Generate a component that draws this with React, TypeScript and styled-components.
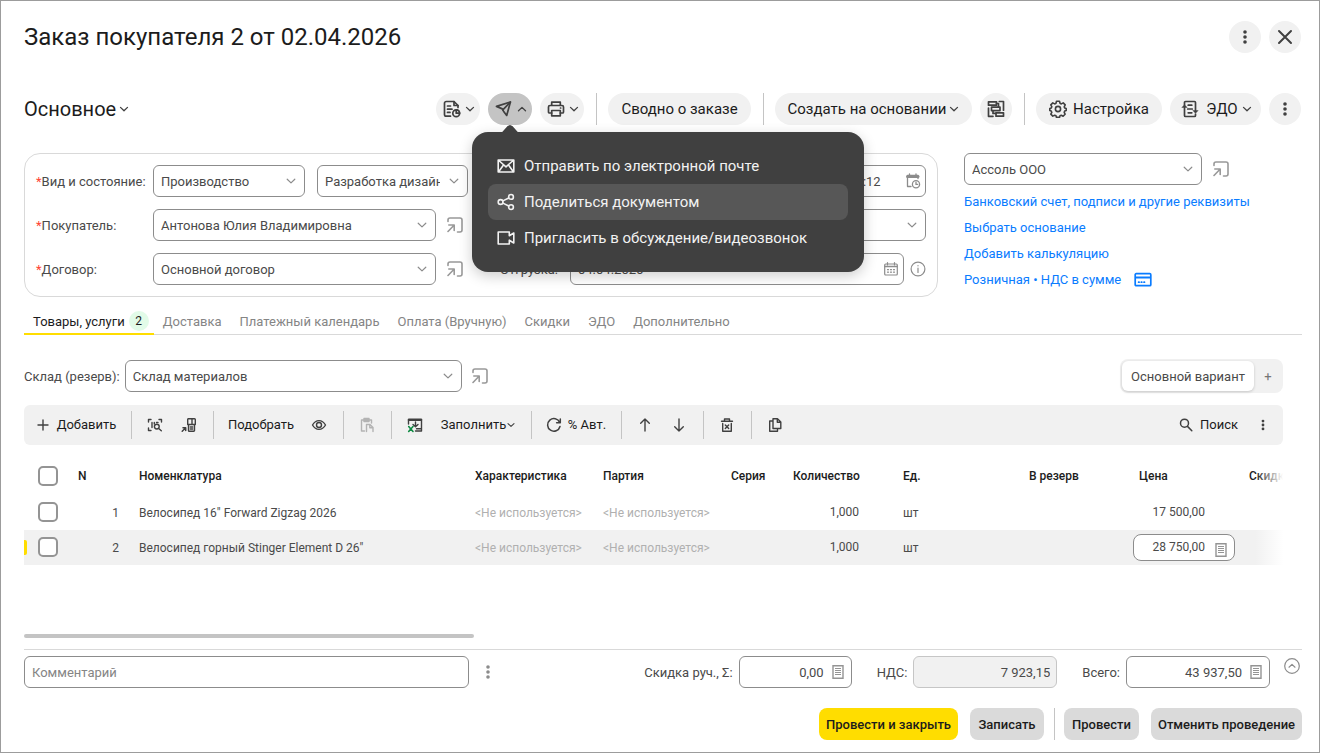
import React from 'react';
import styled, { createGlobalStyle, css } from 'styled-components';

const c = {
  ink: '#1c1c1c',
  text: '#4a4a4a',
  muted: '#858585',
  faint: '#b0b0b0',
  icon: '#404040',
  frame: '#8c8c8c',
  line: '#d9d9d9',
  soft: '#f1f1f1',
  link: '#0a7cff',
  brand: '#ffdd00',
};

const GlobalStyle = createGlobalStyle`
  *, *::before, *::after { box-sizing: border-box; }
  body { margin: 0; background: #fff; }
  body, button, input, select, table {
    font-family: Roboto, "Liberation Sans", sans-serif;
    font-size: 13px;
    line-height: 16px;
    color: ${c.text};
  }
  button { border: 0; padding: 0; background: none; cursor: pointer; }
  svg { display: block; flex: none; }
`;

/* ---------- icons ---------- */

type IconProps = { size?: number; color?: string; width?: number; children: React.ReactNode };

const Svg = ({ size = 18, color = c.icon, width = 1.5, children }: IconProps) => (
  <svg width={size} height={size} viewBox={`0 0 ${size} ${size}`} fill="none" stroke={color}
    strokeWidth={width} strokeLinecap="round" strokeLinejoin="round" aria-hidden="true">
    {children}
  </svg>
);

const Chevron = ({ up = false }: { up?: boolean }) => (
  <Svg size={10} width={1.3}>
    <path d={up ? 'M1.5 6.8 5 3.4l3.5 3.4' : 'M1.5 3.4 5 6.8l3.5-3.4'} />
  </Svg>
);
const SmallChevron = () => <Svg size={8} width={1.1}><path d="M1 2.6 4 5.4l3-2.8" /></Svg>;
const FieldChevron = () => (
  <Svg size={10} color="#8c8c8c" width={1.2}><path d="M1.2 3.2 5 6.9 8.8 3.2" /></Svg>
);
const Dots = ({ color = c.icon, size = 18 }: { color?: string; size?: number }) => (
  <svg width={size} height={size} viewBox="0 0 18 18" fill={color} aria-hidden="true">
    <circle cx="9" cy="4" r="1.8" /><circle cx="9" cy="9" r="1.8" /><circle cx="9" cy="14" r="1.8" />
  </svg>
);
const CloseIcon = () => <Svg width={2}><path d="M3 3l12 12M15 3 3 15" /></Svg>;
const ReportIcon = () => (
  <Svg width={1.7}>
    <path d="M7.5 16.2H3.2A1.7 1.7 0 0 1 1.5 14.5V3.2A1.7 1.7 0 0 1 3.2 1.5H11L15 5.5V7.5" />
    <path d="M11 1.5V5.5H15M4.5 6H7.5M4.5 9.2H9M4.5 12.4H7" />
    <circle cx="13.2" cy="13.2" r="3.4" />
    <path d="M13.2 9.8a3.4 3.4 0 0 1 3.4 3.4h-3.4z" fill={c.soft} />
  </Svg>
);
const SendIcon = () => (
  <Svg width={1.7}>
    <path d="M1.5 6.4 15.4 2l-3.7 13.5-3.2-4.3-1.2-2.3z" />
    <path d="M7.8 9.8 15.4 2" />
  </Svg>
);
const PrinterIcon = () => (
  <Svg width={1.7}>
    <path d="M4.7 5.5V2.2h8.6v3.3M4.7 13H2.5a1 1 0 0 1-1-1V7a1.5 1.5 0 0 1 1.5-1.5h12A1.5 1.5 0 0 1 16.5 7v5a1 1 0 0 1-1 1h-2.2" />
    <path d="M4.7 10.5h8.6v5.3H4.7zM13.5 8h.2" />
  </Svg>
);
const StructureIcon = () => (
  <Svg width={1.7}>
    <path d="M1.5 1.8h8v3.4h-8zM4.5 7.2h8.5v3.4H4.5zM9 12.8h7.5v3.4H9z" />
    <path d="M12.3 1.5h4.2v8.7M1.5 8v8.3h4.5M9.5 3.5h2v3.5M6 10.8v2.6h2.7" />
  </Svg>
);
const GearIcon = () => (
  <Svg width={1.6}>
    <circle cx="9" cy="9" r="2.6" />
    <path d="M7.5 1.3h3l.5 2 1.3.6 1.9-1 2 2-1 1.9.6 1.3 1.4.4v2l-1.5.6-.5 1.3.9 1.8-2 2-1.8-.9-1.3.5-.5 1.6h-3L7 15.7l-1.3-.5-1.900.9-2-2 1-1.800-.6-1.300-1.400-.5v-2l1.500-.5.5-1.300-1-1.800 2-2 1.900 1L7 3.300z" />
  </Svg>
);
const EdoIcon = () => (
  <Svg width={1.7}>
    <path d="M3.5 5V2.500a1 1 0 0 1 1-1h9a1 1 0 0 1 1 1V11M3.500 7v8.500a1 1 0 0 0 1 1h9a1 1 0 0 0 1-1v-1.500" />
    <path d="M7.2 5.2h3.6M6.7 9h4.6M7.2 12.8h3.6" />
    <path d="M1.2 7.2 3.5 4.8 5.8 7.2zM12.2 10.8l2.3 2.4 2.3-2.4z" fill={c.icon} strokeWidth=".6" />
  </Svg>
);
const MailIcon = () => (
  <Svg color="#f2f2f2" width={1.6}>
    <path d="M1.2 3h15.6v12H1.2zM1.8 3.5 9 9.8l7.2-6.3M1.8 14.5 6.5 8M16.2 14.5 11.5 8" />
  </Svg>
);
const ShareIcon = () => (
  <Svg color="#f2f2f2" width={1.6}>
    <circle cx="3.6" cy="9" r="2.4" /><circle cx="14" cy="3.9" r="2.4" /><circle cx="14" cy="14.1" r="2.4" />
    <path d="M5.9 7.9 11.8 5M5.900 10.100l5.900 2.900" />
  </Svg>
);
const VideoIcon = () => (
  <Svg color="#f2f2f2" width={1.6}>
    <path d="M1.2 3h11.1v3.8L16.8 4v10l-4.5-2.8V15H1.2z" />
  </Svg>
);
const OpenIcon = () => (
  <Svg size={16} color="#999" width={1.6}>
    <path d="M1 4.5V3a2 2 0 0 1 2-2h10a2 2 0 0 1 2 2v10a2 2 0 0 1-2 2H10.5" />
    <path d="M1.8 8H7.2v5.500M7 8.200 1 14.500" />
  </Svg>
);
const DateTimeIcon = () => (
  <Svg size={16} color="#8c8c8c" width={1.3}>
    <path d="M6 13.5H2.5v-11h10.5v3M4.5 1v1.5M11 1v1.5" />
    <path d="M2.5 3.5h10.5" strokeWidth="3" />
    <circle cx="11" cy="11.2" r="3.6" /><path d="M11 9.2v2.2h1.6" />
  </Svg>
);
const CalendarIcon = () => (
  <Svg size={16} color="#8c8c8c" width={1.2}>
    <rect x="1.7" y="3" width="12.6" height="11" rx="1" /><path d="M2 5.5h12" strokeWidth="1.5" /><path d="M4.5 1.5V4M11.5 1.5V4" />
    <path d="M4.5 8.7h1M7.5 8.7h1M10.5 8.7h1M4.5 11.2h1M7.5 11.2h1M10.5 11.2h1" />
  </Svg>
);
const InfoIcon = () => (
  <Svg size={16} color="#8c8c8c" width={1.2}>
    <circle cx="8" cy="8" r="6.9" /><path d="M8 7.2v4.3M8 4.6v.2" />
  </Svg>
);
const CardIcon = () => (
  <Svg color={c.link} width={1.7}>
    <rect x="1.2" y="2.7" width="15.6" height="12" rx="1" /><path d="M2 6.6h14" strokeWidth="2" />
    <path d="M4.6 11.2h.5M7.3 11.2h.5M10 11.2h.5" />
  </Svg>
);
const PlusIcon = () => <Svg size={16} width={1.4}><path d="M8 3v10M3 8h10" /></Svg>;
const ScanIcon = () => (
  <Svg size={16} width={1.4}>
    <path d="M1.5 5V2.5h2.500M12 2.500h2.500V5M4 13.500H1.500V11M5 5.500v5M7.300 5.500v1.500M9.500 5.500h1.500" />
    <circle cx="9.8" cy="9.6" r="2.4" /><path d="M11.7 11.5l2.6 2.3" />
  </Svg>
);
const TerminalIcon = () => (
  <Svg size={16} width={1.4}>
    <path d="M7 1.7h6.5a.8.8 0 0 1 .8.8v5H6.7V2.500zM7.500 7.500v6a.8.8 0 0 0 .8.8h4.400a.8.8 0 0 0 .8-.8v-6M11 2v5.500M9.300 10h2.400M9.300 12h2.400" />
    <path d="M1.2 14.3l3-3M2 10.8h2.7v2.7" strokeWidth="1.5" />
  </Svg>
);
const EyeIcon = () => (
  <Svg size={16} width={1.4}>
    <path d="M1.5 8Q4 3.6 8 3.6T14.5 8Q12 12.4 8 12.4T1.5 8z" />
    <circle cx="8" cy="8" r="2.5" />
  </Svg>
);
const PasteIcon = () => (
  <Svg size={16} color="#b3b3b3" width={1.4}>
    <path d="M5.5 14H2.5V3h10v3M5 1.5h5v3H5z" /><path d="M7.5 7.5h3.5l3 3v4M7.5 7.5v7M10.8 7.7v3h3" />
  </Svg>
);
const ExcelIcon = () => (
  <Svg size={16} width={1.4}>
    <path d="M2 2.7h12" strokeWidth="2.6" /><path d="M1.5 3v4M14.5 3v11H8.5M8.500 5v4.500M6 7.500l2.500 2.300L11 7.500M9.500 11.800h4.500" />
    <path d="M1.7 9.5l4.3 5M6 9.5l-4.3 5" stroke="#0f8a43" strokeWidth="1.6" />
  </Svg>
);
const RefreshIcon = () => (
  <Svg size={16} width={1.5}><path d="M14 9.5A6.3 6.3 0 1 1 13.7 5.4M14.3 2v3.7h-3.7" /></Svg>
);
const ArrowIcon = ({ down = false }: { down?: boolean }) => (
  <Svg size={16} width={1.4}>
    <path d={down ? 'M8 2v12M3.7 9.8 8 14 12.3 9.8' : 'M8 14V2M3.7 6.2 8 2 12.3 6.2'} />
  </Svg>
);
const TrashIcon = () => (
  <Svg size={16} width={1.4}>
    <path d="M2.5 4.2h11M5.5 4V2h5v2M3.7 6.5v7.8h8.6V6.5M6.3 8l3.4 3.6M9.7 8l-3.4 3.6" />
  </Svg>
);
const CopyIcon = () => (
  <Svg size={16} width={1.4}>
    <path d="M6 1.7h4.5L13.8 5v6.5H6zM10.3 2v3.2h3.3M6 4H2.7v10.3h7.8v-2.8" />
  </Svg>
);
const SearchIcon = () => (
  <Svg size={16} width={1.5}><circle cx="6.5" cy="6.2" r="4" /><path d="M9.5 9.4l4.3 4.3" /></Svg>
);
const CalcIcon = () => (
  <Svg size={14} color="#949494" width={1.4}>
    <path d="M2 .7h10v12.600H2z" strokeLinejoin="miter" />
    <path d="M4 3.5h6M4 5.5h6M4 7.5h6M4 9.5h6" strokeWidth="1" strokeLinecap="butt" />
  </Svg>
);
const CollapseIcon = () => (
  <Svg size={16} color="#8c8c8c" width={1.2}><circle cx="8" cy="8" r="7.3" /><path d="M5 9.2 8 6.4l3 2.8" /></Svg>
);

/* ---------- layout ---------- */

const Page = styled.main`
  display: flex;
  flex-direction: column;
  min-height: 100vh;
  padding: 20px 17px 12px 23px;
  border: 1px solid #9c9c9c;
  background: #fff;
`;
const Header = styled.header`
  display: flex;
  align-items: center;
  justify-content: space-between;
  padding-right: 1px;
`;
const Title = styled.h1`
  margin: 0;
  font-size: 24px;
  line-height: 32px;
  font-weight: 400;
  color: ${c.ink};
`;
const Cluster = styled.div<{ $gap?: number }>`
  display: flex;
  align-items: center;
  gap: ${p => p.$gap ?? 8}px;
`;
const Toolbar = styled(Header)`
  margin-top: 40px;
`;
const SectionButton = styled.button`
  display: flex;
  align-items: center;
  gap: 3px;
  font-size: 20px;
  line-height: 32px;
  color: ${c.ink};
`;
const Pill = styled.button<{ $w: number; $active?: boolean }>`
  display: flex;
  align-items: center;
  justify-content: center;
  gap: 3px;
  min-width: ${p => p.$w}px;
  height: 32px;
  border-radius: 16px;
  background: ${p => (p.$active ? '#c4c4c4' : c.soft)};
  font-size: 15px;
  line-height: 20px;
  color: ${c.ink};
`;
const IconPill = styled(Pill)`
  gap: 4px;
  padding-left: 2px;
`;
const IconGap = styled.span`
  display: flex;
  margin-right: 3px;
`;
const Rule = styled.span`
  flex: none;
  width: 1px;
  height: 32px;
  background: #c4c4c4;
`;
const ToolbarRule = styled(Rule)`
  margin: 0 3px 0 4px;
`;
const CommandRule = styled(Rule)`
  height: 28px;
  margin: 0 6px 0 7px;
`;
const ActionRule = styled(Rule)`
  margin: 0 -3px 0 -2px;
`;

/* ---------- drop-down menu ---------- */

const MenuAnchor = styled.div`
  position: relative;
`;
const Menu = styled.div`
  position: absolute;
  z-index: 2;
  top: 39px;
  left: -16px;
  width: 392px;
  padding: 16px;
  border-radius: 16px;
  background: #404040;
  box-shadow: 0 4px 14px rgba(0, 0, 0, 0.2);
  &::before {
    content: '';
    position: absolute;
    top: -7px;
    left: 28px;
    width: 20px;
    height: 8px;
    background: #404040;
    clip-path: polygon(0 100%, 10% 92%, 38% 12%, 50% 0, 62% 12%, 90% 92%, 100% 100%);
  }
`;
const MenuItem = styled.button<{ $hover?: boolean }>`
  display: flex;
  align-items: center;
  gap: 9px;
  width: 100%;
  height: 36px;
  padding: 0 9px;
  border-radius: 8px;
  background: ${p => (p.$hover ? '#575757' : 'transparent')};
  font-size: 15px;
  line-height: 20px;
  color: #f2f2f2;
`;

/* ---------- fields ---------- */

const control = css`
  width: 100%;
  height: 32px;
  border: 1px solid ${c.frame};
  border-radius: 6px;
  background: #fff;
  color: ${c.text};
  outline: 0;
`;
const Box = styled.div<{ $w?: number }>`
  position: relative;
  ${p => (p.$w ? `width: ${p.$w}px; flex: none;` : 'flex: 1; min-width: 0;')}
`;
const Select = styled.select`
  ${control}
  appearance: none;
  padding: 2px 27px 0 7px;
  text-overflow: clip;
`;
const Input = styled.input<{ $right?: boolean; $icon?: boolean }>`
  ${control}
  padding: 1px ${p => (p.$icon ? 27 : 6)}px 0 7px;
  text-align: ${p => (p.$right ? 'right' : 'left')};
  &::placeholder { color: ${c.muted}; opacity: 1; }
  &:disabled { background: ${c.soft}; border-color: #c6c6c6; }
`;
const Adornment = styled.span<{ $right?: number }>`
  position: absolute;
  top: 0;
  bottom: 0;
  right: ${p => p.$right ?? 9}px;
  display: flex;
  align-items: center;
  pointer-events: none;
`;

type DropProps = { id?: string; label?: string; value: string; w?: number };
const Dropdown = ({ id, label, value, w }: DropProps) => (
  <Box $w={w}>
    <Select id={id} aria-label={label} defaultValue={value}>
      <option value={value}>{value}</option>
    </Select>
    <Adornment><FieldChevron /></Adornment>
  </Box>
);

const IconButton = styled.button`
  display: flex;
  margin: 0 5px;
`;
const FormArea = styled.div`
  display: flex;
  align-items: flex-start;
  gap: 26px;
  margin-top: 28px;
`;
const Panel = styled.section`
  flex: 1;
  display: grid;
  grid-template-columns: minmax(0, 432px) minmax(0, 1fr);
  gap: 12px 32px;
  padding: 11px;
  border: 1px solid ${c.line};
  border-radius: 16px;
`;
const Row = styled.div<{ $gap?: number; $end?: boolean }>`
  display: flex;
  align-items: center;
  gap: ${p => p.$gap ?? 6}px;
  justify-content: ${p => (p.$end ? 'flex-end' : 'flex-start')};
`;
const FieldPair = styled.div`
  flex: 1;
  display: flex;
  gap: 12px;
  min-width: 0;
`;
const Label = styled.label<{ $w?: number; $required?: boolean }>`
  ${p => p.$w && `width: ${p.$w}px;`}
  flex: none;
  padding-top: 2px;
  white-space: nowrap;
  ${p => p.$required && css`&::before { content: '*'; color: #ff4433; }`}
`;
const Side = styled.aside`
  width: 338px;
`;
const Link = styled.a`
  color: ${c.link};
  text-decoration: none;
  line-height: 26px;
`;
const Links = styled.div`
  display: flex;
  flex-direction: column;
  align-items: flex-start;
  margin-top: 4px;
`;

/* ---------- tabs ---------- */

const Tabs = styled.nav`
  display: flex;
  height: 26px;
  margin-top: 12px;
  box-shadow: inset 0 -1px ${c.line};
`;
const Tab = styled.button<{ $active?: boolean }>`
  display: flex;
  align-items: center;
  gap: 4px;
  height: 26px;
  padding: 2px ${p => (p.$active ? 5 : 9)}px 0 9px;
  border-bottom: 2px solid ${p => (p.$active ? c.brand : 'transparent')};
  color: ${p => (p.$active ? c.ink : c.muted)};
`;
const Badge = styled.span`
  width: 20px;
  height: 20px;
  margin-bottom: 2px;
  border-radius: 10px;
  background: #e2fbe8;
  font-size: 12px;
  line-height: 20px;
  text-align: center;
`;

/* ---------- goods section ---------- */

const Goods = styled.section`
  flex: 1;
  display: flex;
  flex-direction: column;
  margin: 24px 19px 0 0;
`;
const Between = styled.div`
  display: flex;
  align-items: center;
  justify-content: space-between;
`;
const Variants = styled.div`
  display: flex;
  height: 34px;
  padding: 2px 1px 2px 2px;
  border-radius: 8px;
  background: ${c.soft};
`;
const Variant = styled.button<{ $active?: boolean }>`
  width: ${p => (p.$active ? 132 : 28)}px;
  padding-top: 2px;
  border-radius: 6px;
  color: ${p => (p.$active ? c.text : '#757575')};
  ${p => p.$active && css`background: #fff; box-shadow: 0 1px 3px rgba(0, 0, 0, 0.18);`}
`;
const CommandBar = styled.div`
  display: flex;
  align-items: center;
  height: 40px;
  margin-top: 12px;
  padding: 0 3px;
  border-radius: 6px;
  background: ${c.soft};
`;
const Command = styled.button<{ $w?: number }>`
  display: flex;
  align-items: center;
  justify-content: center;
  gap: 6px;
  width: ${p => p.$w ?? 34}px;
  height: 32px;
  white-space: nowrap;
  color: ${c.ink};
`;
const Tight = styled.span`
  display: flex;
  align-items: center;
  gap: 1px;
`;
const Spring = styled.span`
  flex: 1;
`;
const TableWrap = styled.div`
  position: relative;
  flex: 1;
  min-height: 177px;
  margin-top: 12px;
  overflow: hidden;
  &::after {
    content: '';
    position: absolute;
    top: 0;
    right: 0;
    bottom: 0;
    width: 28px;
    background: linear-gradient(to right, rgba(255, 255, 255, 0), #fff);
  }
`;
const Table = styled.table`
  width: calc(100% + 68px);
  table-layout: fixed;
  border-collapse: collapse;
`;
const Th = styled.th`
  height: 38px;
  padding: 0 8px;
  font-size: 12px;
  font-weight: 500;
  text-align: left;
  white-space: nowrap;
  color: ${c.ink};
`;
const Tr = styled.tr<{ $selected?: boolean }>`
  background: ${p => (p.$selected ? c.soft : 'transparent')};
`;
const Td = styled.td<{ $kind?: 'number' | 'index' | 'empty' | 'edit' | 'mark' }>`
  height: 35px;
  padding: 0 8px;
  font-size: 12px;
  white-space: nowrap;
  ${p => p.$kind === 'number' && 'text-align: right; padding: 0 36px 2px 0;'}
  ${p => p.$kind === 'index' && 'text-align: right; padding-right: 12px;'}
  ${p => p.$kind === 'empty' && `color: ${c.faint};`}
  ${p => p.$kind === 'edit' && 'padding: 0 6px 0 2px;'}
  ${p => p.$kind === 'mark' && 'padding: 0 0 1px;'}
`;
const Mark = styled.span<{ $on?: boolean }>`
  display: flex;
  align-items: center;
  gap: 11px;
  &::before {
    content: '';
    width: 3px;
    height: 15px;
    border-radius: 0 2px 2px 0;
    background: ${p => (p.$on ? c.brand : 'transparent')};
  }
`;
const Check = styled.input`
  appearance: none;
  width: 20px;
  height: 20px;
  margin: 0;
  border: 2px solid #949494;
  border-radius: 5px;
  background: #fff;
`;
const CellInput = styled.input`
  ${control}
  height: 27px;
  padding: 0 29px 2px 8px;
  border-radius: 8px;
  font-size: 12px;
  text-align: right;
`;
const CellAdornment = styled(Adornment)`
  padding-top: 5px;
`;
const ScrollThumb = styled.div`
  width: 450px;
  height: 4px;
  border-radius: 2px;
  background: #c4c4c4;
`;

/* ---------- footer ---------- */

const Footer = styled.footer`
  margin-top: 11px;
  padding-top: 6px;
  border-top: 1px solid ${c.line};
`;
const Totals = styled.div`
  display: flex;
  align-items: center;
  gap: 25px;
`;
const Collapse = styled.button`
  display: flex;
  align-self: flex-start;
  margin: 2px 2px 0 -11px;
`;
const Actions = styled.div`
  display: flex;
  align-items: center;
  justify-content: flex-end;
  gap: 12px;
  margin-top: 20px;
`;
const Action = styled.button<{ $primary?: boolean; $w: number }>`
  min-width: ${p => p.$w}px;
  height: 32px;
  padding-top: 1px;
  border-radius: 8px;
  background: ${p => (p.$primary ? c.brand : '#dadada')};
  font-weight: 500;
  color: ${c.ink};
`;

const columns: [string, number | undefined][] = [
  ['N', 61], ['Номенклатура', undefined], ['Характеристика', 128], ['Партия', 128],
  ['Серия', 62], ['Количество', 110], ['Ед.', 126], ['В резерв', 110], ['Цена', 110], ['Скидка', 110],
];
const rows = [
  { n: 1, name: 'Велосипед 16" Forward Zigzag 2026', price: '17 500,00' },
  { n: 2, name: 'Велосипед горный Stinger Element D 26"', price: '28 750,00', selected: true },
];
const tabs = ['Доставка', 'Платежный календарь', 'Оплата (Вручную)', 'Скидки', 'ЭДО', 'Дополнительно'];

export default function App() {
  return (
    <>
      <GlobalStyle />
      <Page>
        <Header>
          <Title>Заказ покупателя 2 от 02.04.2026</Title>
          <Cluster>
            <Pill $w={32} aria-label="Ещё"><Dots /></Pill>
            <Pill $w={32} aria-label="Закрыть"><CloseIcon /></Pill>
          </Cluster>
        </Header>

        <Toolbar as="div">
          <SectionButton>Основное<Chevron /></SectionButton>
          <Cluster>
            <IconPill $w={44} aria-label="Отчеты"><ReportIcon /><Chevron /></IconPill>
            <MenuAnchor>
              <IconPill $w={44} $active aria-label="Отправить" aria-expanded="true"><SendIcon /><Chevron up /></IconPill>
              <Menu role="menu">
                <MenuItem role="menuitem"><MailIcon />Отправить по электронной почте</MenuItem>
                <MenuItem role="menuitem" $hover><ShareIcon />Поделиться документом</MenuItem>
                <MenuItem role="menuitem"><VideoIcon />Пригласить в обсуждение/видеозвонок</MenuItem>
              </Menu>
            </MenuAnchor>
            <IconPill $w={44} aria-label="Печать"><PrinterIcon /><Chevron /></IconPill>
            <ToolbarRule />
            <Pill $w={143}>Сводно о заказе</Pill>
            <ToolbarRule />
            <Pill $w={197}>Создать на основании<Chevron /></Pill>
            <Pill $w={32} aria-label="Структура"><StructureIcon /></Pill>
            <ToolbarRule />
            <Pill $w={126}><IconGap><GearIcon /></IconGap>Настройка</Pill>
            <IconPill as={Pill} $w={91}><IconGap><EdoIcon /></IconGap>ЭДО<Chevron /></IconPill>
            <Pill $w={32} aria-label="Ещё"><Dots /></Pill>
          </Cluster>
        </Toolbar>

        <FormArea>
          <Panel>
            <Row>
              <Label $w={111} $required htmlFor="kind">Вид и состояние:</Label>
              <FieldPair>
                <Dropdown id="kind" value="Производство" w={152} />
                <Dropdown label="Состояние" value="Разработка дизайна" />
              </FieldPair>
            </Row>
            <Row $end>
              <Box $w={172}>
                <Input aria-label="Дата" defaultValue="02.04.2026 12:12:12" $icon />
                <Adornment $right={5}><DateTimeIcon /></Adornment>
              </Box>
            </Row>
            <Row>
              <Label $w={111} $required htmlFor="buyer">Покупатель:</Label>
              <Dropdown id="buyer" value="Антонова Юлия Владимировна" />
              <IconButton aria-label="Открыть"><OpenIcon /></IconButton>
            </Row>
            <Row $end>
              <Dropdown label="Подразделение" value="" w={356} />
            </Row>
            <Row>
              <Label $w={111} $required htmlFor="contract">Договор:</Label>
              <Dropdown id="contract" value="Основной договор" />
              <IconButton aria-label="Открыть"><OpenIcon /></IconButton>
            </Row>
            <Row>
              <Label $w={64} htmlFor="ship">Отгрузка:</Label>
              <Box>
                <Input id="ship" defaultValue="04.04.2026" $icon />
                <Adornment $right={5}><CalendarIcon /></Adornment>
              </Box>
              <InfoIcon />
            </Row>
          </Panel>
          <Side>
            <Row>
              <Dropdown label="Организация" value="Ассоль ООО" w={238} />
              <IconButton aria-label="Открыть"><OpenIcon /></IconButton>
            </Row>
            <Links>
              <Link href="#bank">Банковский счет, подписи и другие реквизиты</Link>
              <Link href="#base">Выбрать основание</Link>
              <Link href="#calc">Добавить калькуляцию</Link>
              <Cluster $gap={13}>
                <Link href="#price">Розничная • НДС в сумме</Link>
                <CardIcon />
              </Cluster>
            </Links>
          </Side>
        </FormArea>

        <Tabs>
          <Tab $active>Товары, услуги<Badge>2</Badge></Tab>
          {tabs.map(t => <Tab key={t}>{t}</Tab>)}
        </Tabs>

        <Goods>
          <Between>
            <Row $gap={5}>
              <Label htmlFor="store">Склад (резерв):</Label>
              <Dropdown id="store" value="Склад материалов" w={337} />
              <IconButton aria-label="Открыть"><OpenIcon /></IconButton>
            </Row>
            <Variants>
              <Variant $active>Основной вариант</Variant>
              <Variant aria-label="Добавить вариант">+</Variant>
            </Variants>
          </Between>

          <CommandBar>
            <Command $w={97}><PlusIcon />Добавить</Command>
            <CommandRule />
            <Command aria-label="Сканировать"><ScanIcon /></Command>
            <Command aria-label="Терминал"><TerminalIcon /></Command>
            <CommandRule />
            <Command $w={82}>Подобрать</Command>
            <Command aria-label="Просмотр"><EyeIcon /></Command>
            <CommandRule />
            <Command aria-label="Вставить"><PasteIcon /></Command>
            <CommandRule />
            <Command aria-label="Загрузить"><ExcelIcon /></Command>
            <Command $w={92}><Tight>Заполнить<SmallChevron /></Tight></Command>
            <CommandRule />
            <Command $w={76}><RefreshIcon />% Авт.</Command>
            <CommandRule />
            <Command aria-label="Вверх"><ArrowIcon /></Command>
            <Command aria-label="Вниз"><ArrowIcon down /></Command>
            <CommandRule />
            <Command aria-label="Удалить"><TrashIcon /></Command>
            <CommandRule />
            <Command aria-label="Копировать"><CopyIcon /></Command>
            <Spring />
            <Command $w={76}><SearchIcon />Поиск</Command>
            <Command aria-label="Ещё"><Dots size={14} /></Command>
          </CommandBar>

          <TableWrap>
            <Table>
              <colgroup>
                <col style={{ width: 46 }} />
                {columns.map(([name, w]) => <col key={name} style={{ width: w }} />)}
              </colgroup>
              <thead>
                <tr>
                  <Td as="th" $kind="mark"><Mark><Check type="checkbox" aria-label="Выбрать все" /></Mark></Td>
                  {columns.map(([name]) => <Th key={name}>{name}</Th>)}
                </tr>
              </thead>
              <tbody>
                {rows.map(r => (
                  <Tr key={r.n} $selected={r.selected}>
                    <Td $kind="mark">
                      <Mark $on={r.selected}><Check type="checkbox" aria-label={`Строка ${r.n}`} /></Mark>
                    </Td>
                    <Td $kind="index">{r.n}</Td>
                    <Td>{r.name}</Td>
                    <Td $kind="empty">&lt;Не используется&gt;</Td>
                    <Td $kind="empty">&lt;Не используется&gt;</Td>
                    <Td />
                    <Td $kind="number">1,000</Td>
                    <Td>шт</Td>
                    <Td />
                    {r.selected ? (
                      <Td $kind="edit">
                        <Box>
                          <CellInput aria-label="Цена" defaultValue={r.price} />
                          <CellAdornment $right={7}><CalcIcon /></CellAdornment>
                        </Box>
                      </Td>
                    ) : (
                      <Td $kind="number">{r.price}</Td>
                    )}
                    <Td />
                  </Tr>
                ))}
              </tbody>
            </Table>
          </TableWrap>
          <ScrollThumb />
        </Goods>

        <Footer>
          <Totals>
            <Row $gap={10}>
              <Box $w={445}><Input placeholder="Комментарий" aria-label="Комментарий" /></Box>
              <button aria-label="Ещё"><Dots color="#8c8c8c" /></button>
            </Row>
            <Spring />
            <Row>
              <Label htmlFor="discount">Скидка руч., Σ:</Label>
              <Box $w={113}>
                <Input id="discount" defaultValue="0,00" $right $icon />
                <Adornment $right={7}><CalcIcon /></Adornment>
              </Box>
            </Row>
            <Row>
              <Label htmlFor="vat">НДС:</Label>
              <Box $w={144}><Input id="vat" defaultValue="7 923,15" $right disabled /></Box>
            </Row>
            <Row>
              <Label htmlFor="total">Всего:</Label>
              <Box $w={144}>
                <Input id="total" defaultValue="43 937,50" $right $icon />
                <Adornment $right={7}><CalcIcon /></Adornment>
              </Box>
            </Row>
            <Collapse aria-label="Свернуть"><CollapseIcon /></Collapse>
          </Totals>
          <Actions>
            <Action $primary $w={139}>Провести и закрыть</Action>
            <Action $w={74}>Записать</Action>
            <ActionRule />
            <Action $w={75}>Провести</Action>
            <Action $w={151}>Отменить проведение</Action>
          </Actions>
        </Footer>
      </Page>
    </>
  );
}
